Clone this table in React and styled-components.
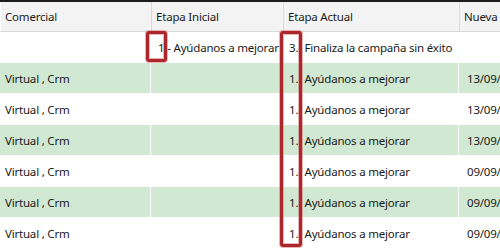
import styled, { createGlobalStyle } from "styled-components";

const GlobalStyle = createGlobalStyle`
  html, body {
    margin: 0;
    padding: 0;
    background: #fff;
    overflow: hidden;
  }
  body {
    font-family: "Noto Sans", "Open Sans", sans-serif;
    font-size: 11.5px;
    letter-spacing: -0.2px;
    color: #1a1a1a;
  }
`;

const COLS = "151px 132px 176px 200px";

const Grid = styled.div`
  position: relative;
  width: 500px;
  height: 250px;
  overflow: hidden;
  border-top: 2px solid #1c1c1c;
`;

const HeaderRow = styled.div`
  display: grid;
  grid-template-columns: ${COLS};
  height: 29px;
  background: #f3f3f3;
  border-bottom: 1px solid #d7d7d7;
  border-left: 1px solid #fff;
`;

const HeaderCell = styled.div`
  display: flex;
  align-items: center;
  padding-left: 4px;
  border-right: 1px solid #dadada;
  white-space: nowrap;
  overflow: hidden;
`;

const Row = styled.div`
  display: grid;
  grid-template-columns: ${COLS};
  height: 30px;
  border-bottom: 1px solid #fff;
  background: ${(p) => (p.$alt ? "#d1e8d3" : "#fff")};
`;

const Cell = styled.div`
  display: flex;
  align-items: center;
  padding-left: ${(p) => p.$pad || 5}px;
  border-right: 1px solid #fff;
  white-space: nowrap;
  overflow: hidden;
`;

const Mark = styled.div`
  position: absolute;
  left: ${(p) => p.$x}px;
  top: ${(p) => p.$y}px;
  width: ${(p) => p.$w}px;
  height: ${(p) => p.$h}px;
  box-sizing: border-box;
  border: 3px solid #ad262b;
  border-radius: 3px;
  box-shadow: 0 0 0 1px rgba(214, 120, 124, 0.55),
    inset 0 0 0 1px rgba(214, 120, 124, 0.55);
`;

const rows = [
  { comercial: "", inicial: "1.- Ayúdanos a mejorar", actual: "3.- Finaliza la campaña sin éxito", nueva: "" },
  { comercial: "Virtual , Crm", inicial: "", actual: "1.- Ayúdanos a mejorar", nueva: "13/09/2019" },
  { comercial: "Virtual , Crm", inicial: "", actual: "1.- Ayúdanos a mejorar", nueva: "13/09/2019" },
  { comercial: "Virtual , Crm", inicial: "", actual: "1.- Ayúdanos a mejorar", nueva: "13/09/2019" },
  { comercial: "Virtual , Crm", inicial: "", actual: "1.- Ayúdanos a mejorar", nueva: "09/09/2019" },
  { comercial: "Virtual , Crm", inicial: "", actual: "1.- Ayúdanos a mejorar", nueva: "09/09/2019" },
  { comercial: "Virtual , Crm", inicial: "", actual: "1.- Ayúdanos a mejorar", nueva: "09/09/2019" },
];

export default function App() {
  return (
    <>
      <GlobalStyle />
      <Grid>
        <HeaderRow>
          <HeaderCell>Comercial</HeaderCell>
          <HeaderCell>Etapa Inicial</HeaderCell>
          <HeaderCell>Etapa Actual</HeaderCell>
          <HeaderCell>Nueva Fecha</HeaderCell>
        </HeaderRow>
        {rows.map((r, i) => (
          <Row key={i} $alt={i % 2 === 1}>
            <Cell>{r.comercial}</Cell>
            <Cell $pad={7}>{r.inicial}</Cell>
            <Cell $pad={6}>{r.actual}</Cell>
            <Cell $pad={8}>{r.nueva}</Cell>
          </Row>
        ))}
        <Mark $x={146} $y={29} $w={21} $h={31} />
        <Mark $x={280} $y={29} $w={22} $h={216} />
      </Grid>
    </>
  );
}
